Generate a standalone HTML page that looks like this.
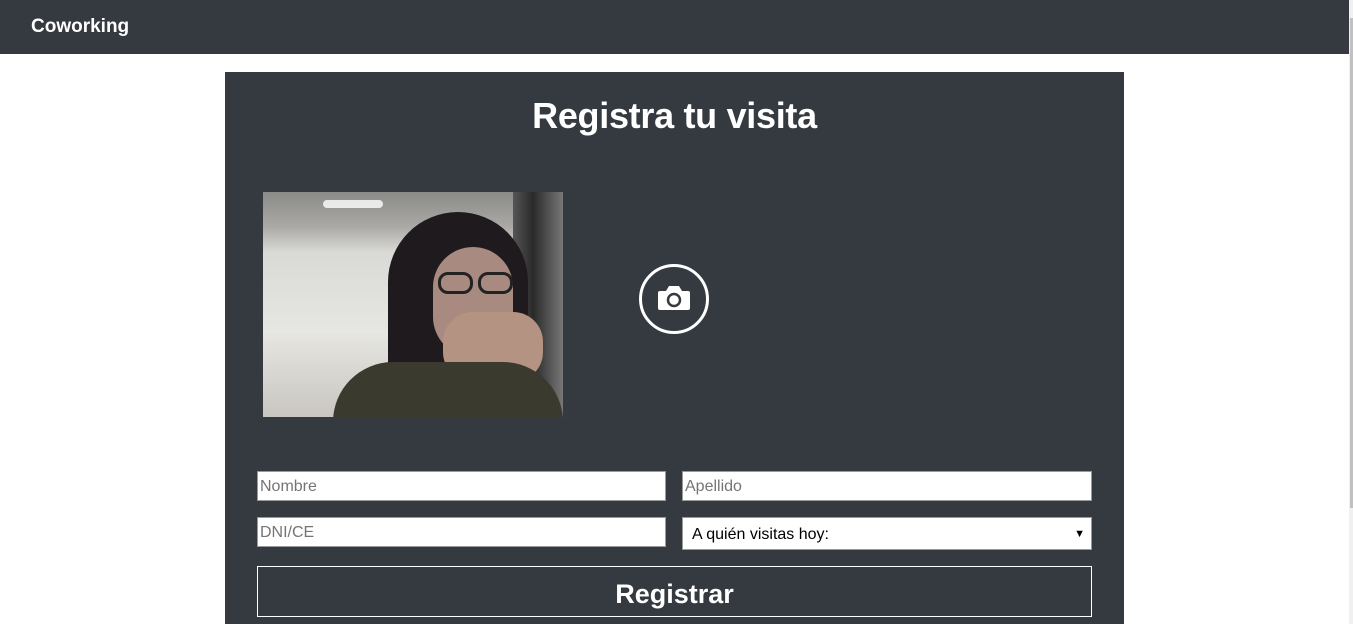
<!DOCTYPE html>
<html><head><meta charset="utf-8"><style>
*{box-sizing:border-box;margin:0;padding:0}
body{width:1353px;height:624px;overflow:hidden;background:#fff;font-family:"Liberation Sans",sans-serif;position:relative}
.nav{position:absolute;left:0;top:0;width:1349px;height:54px;background:#343a40}
.nav span{position:absolute;left:31px;top:16px;color:#fff;font-weight:bold;font-size:19px}
.sb{position:absolute;left:1349px;top:0;width:4px;height:624px;background:#f0f0f0}
.sb i{position:absolute;left:1px;top:18px;width:3px;height:490px;background:#c1c1c1}
.panel{position:absolute;left:225px;top:72px;width:899px;height:552px;background:#343a40}
h1{position:absolute;left:0;width:899px;top:23px;text-align:center;color:#fff;font-size:36px;font-weight:bold;letter-spacing:-0.3px}
.photo{position:absolute;left:38px;top:120px;width:300px;height:225px;overflow:hidden;background:linear-gradient(#8a8a88 0,#aaa9a5 35px,#d9d9d5 60px,#e6e6e2 140px,#c8c6bf 225px)}
.cam{position:absolute;left:414px;top:192px;width:70px;height:70px;border:3px solid #fff;border-radius:50%}
input,.sel{position:absolute;height:30px;border:1px solid #999;background:#fff;font-family:"Liberation Sans",sans-serif;font-size:16px;padding-left:2px;padding-top:2px;color:#777}
.btn{position:absolute;left:32px;top:494px;width:835px;height:51px;border:1px solid #fff;color:#fff;font-size:27px;font-weight:bold;text-align:center;line-height:54px}
</style></head><body>
<div class="nav"><span>Coworking</span></div>
<div class="sb"><i></i></div>
<div class="panel">
<h1>Registra tu visita</h1>
<div class="photo">
<div style="position:absolute;left:250px;top:0;width:50px;height:225px;background:linear-gradient(90deg,#555 0,#2a2a2a 20px,#777 50px)"></div>
<div style="position:absolute;left:60px;top:8px;width:60px;height:8px;background:#fff;border-radius:4px;opacity:.8"></div>
<div style="position:absolute;left:125px;top:20px;width:140px;height:240px;border-radius:70px 70px 0 0;background:#1e1a1e"></div>
<div style="position:absolute;left:170px;top:55px;width:80px;height:110px;border-radius:40px;background:#a98a80"></div>
<div style="position:absolute;left:175px;top:80px;width:35px;height:22px;border:3px solid #222;border-radius:10px"></div>
<div style="position:absolute;left:215px;top:80px;width:35px;height:22px;border:3px solid #222;border-radius:10px"></div>
<div style="position:absolute;left:180px;top:120px;width:100px;height:70px;border-radius:30px;background:#b59383"></div>
<div style="position:absolute;left:70px;top:170px;width:230px;height:60px;border-radius:60px 60px 0 0;background:#3a3a2e"></div>
</div>
<div class="cam"><svg width="64" height="64" viewBox="0 0 64 64"><path d="M18 24h6l3-5h10l3 5h6a2 2 0 0 1 2 2v15a2 2 0 0 1-2 2H18a2 2 0 0 1-2-2V26a2 2 0 0 1 2-2z" fill="#fff"/><circle cx="32" cy="33" r="6" fill="none" stroke="#343a40" stroke-width="2.5"/></svg></div>
<input style="left:32px;top:399px;width:409px" placeholder="Nombre">
<input style="left:457px;top:399px;width:410px" placeholder="Apellido">
<input style="left:32px;top:445px;width:409px" placeholder="DNI/CE">
<div class="sel" style="left:457px;top:445px;width:410px;height:33px;color:#000;line-height:33px;padding-top:0;padding-left:9px;font-size:16px">A quién visitas hoy:<span style="position:absolute;right:6px;top:0;font-size:11px">▼</span></div>
<div class="btn">Registrar</div>
</div>
</body></html>
